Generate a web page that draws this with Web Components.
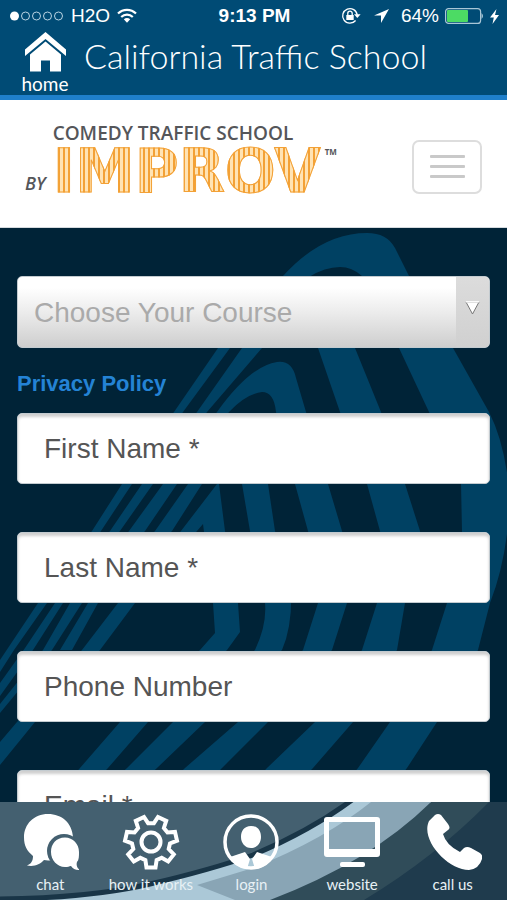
<!DOCTYPE html>
<html lang="en">
<head>
<meta charset="utf-8">
<meta name="viewport" content="width=device-width, initial-scale=1">
<title>California Traffic School</title>
<style>
  html, body { margin: 0; height: 100%; }
  body { font-family: "Liberation Sans", Arial, sans-serif; background: #002337; }
</style>
</head>
<body>
<traffic-app></traffic-app>

<script>
const define = (name, html, setup) => {
  const template = document.createElement('template');
  template.innerHTML = html;
  customElements.define(name, class extends HTMLElement {
    constructor() {
      super();
      this.attachShadow({ mode: 'open' }).append(template.content.cloneNode(true));
    }
    connectedCallback() { if (setup) setup(this, this.shadowRoot); }
  });
};

// Outline of a gear with one tooth pointing straight down.
const gearPath = (cx, cy, teeth, outer, inner) => {
  const points = [];
  for (let i = 0; i < teeth; i++) {
    const mid = 90 + i * 360 / teeth;
    [[-17, inner], [-10, outer], [10, outer], [17, inner]].forEach(([offset, r]) => {
      const a = (mid + offset) * Math.PI / 180;
      points.push((cx + r * Math.cos(a)).toFixed(1) + ' ' + (cy + r * Math.sin(a)).toFixed(1));
    });
  }
  return 'M' + points.join('L') + 'Z';
};

define('status-bar', `
<style>
  :host { display: grid; grid-template-columns: 1fr auto 1fr; align-items: center; height: 32px; padding: 0 8px 0 10px; color: #fff; font-size: 19px; line-height: 24px; }
  div { display: flex; align-items: center; }
  .left { gap: 7px; }
  .right { justify-content: flex-end; gap: 6px; }
  b { font-weight: 700; }
  svg { display: block; flex: none; }
</style>
<div class="left">
  <svg width="54" height="12" viewBox="0 0 54 12" fill="none" stroke="#b9d3e2"><circle cx="4.5" cy="6" r="4.5" fill="#fff" stroke="none"/><circle cx="15.500" cy="6" r="4"/><circle cx="26.500" cy="6" r="4"/><circle cx="37.500" cy="6" r="4"/><circle cx="48.500" cy="6" r="4"/></svg>
  <span>H2O</span>
  <svg width="20" height="16" viewBox="0 0 20 16" fill="none" stroke="#fff" stroke-width="2.200"><path d="M1 5.500C6 .6 14 .6 19 5.500M4.200 9c3.300-3.200 8.300-3.200 11.600 0"/><path d="M6.800 11.300Q10 8.600 13.200 11.300L10 14.800Z" fill="#fff" stroke="none"/></svg>
</div>
<b>9:13 PM</b>
<div class="right">
  <svg width="20" height="18" viewBox="0 0 20 18" fill="none" stroke="#fff" stroke-width="1.300"><path d="M14.600 13.500A7.300 7.300 0 1 1 16.200 8"/><path d="M13 7.200h6.600L16.300 11Z" fill="#fff" stroke="none"/><path d="M5.300 8h7.400v5H5.300Z" fill="#fff" stroke="none"/><path d="M6.800 8V6.300a2.200 2.200 0 0 1 4.400 0V8"/></svg>
  <svg width="28" height="16" viewBox="0 0 28 16"><path d="M22 1 7 7.500h7V15Z" fill="#fff"/></svg>
  <span>64%</span>
  <svg width="39" height="16" viewBox="0 0 39 16"><rect x=".6" y=".6" width="35" height="14.800" rx="3" fill="none" stroke="#a9c6d6" stroke-width="1.200"/><rect x="2" y="2" width="21" height="12" rx="1" fill="#4cdb64"/><path d="M36.500 5q3 3 0 6Z" fill="#a9c6d6"/></svg>
  <svg width="9" height="15" viewBox="0 0 9 15"><path d="M6.500 0 0 8.500h3.800L2.500 15 9 6H5Z" fill="#fff"/></svg>
</div>`);

define('page-header', `
<style>
  :host { display: flex; align-items: flex-start; gap: 14px; height: 63px; padding: 0 20px; background: #004b75; border-bottom: 5px solid #1f7fca; color: #fff; }
  a { display: flex; flex-direction: column; align-items: center; width: 50px; color: inherit; text-decoration: none; font: 400 19px/22px Lato, sans-serif; }
  svg { display: block; margin-bottom: 1px; }
  h1 { margin: 0; padding-top: 4px; font: 300 34px/40px Lato, sans-serif; white-space: nowrap; }
</style>
<a href="#home">
  <svg width="41" height="40" viewBox="0 0 41 40" fill="#fff"><path d="M0 17.500 20.500 0 41 17.500v6.500L20.500 7 0 24Z"/><path d="M5 22.500 20.500 9.500 36 22.500v17H25V28.500h-9v11H5Z"/></svg>
  <span><slot name="home"></slot></span>
</a>
<h1><slot></slot></h1>`);

define('brand-bar', `
<style>
  :host { display: flex; justify-content: space-between; align-items: center; height: 128px; box-sizing: border-box; padding: 0 25px; background: #fff; border-bottom: 1px solid #d5dade; }
  .logo { display: grid; grid-template-columns: auto auto auto; column-gap: 7px; row-gap: 3px; align-items: end; margin-top: -11px; color: #55565a; font-family: "Open Sans", sans-serif; }
  .top { grid-column: 2 / 4; font-size: 19px; line-height: 22px; font-weight: 600; }
  .by { font-size: 18px; line-height: 24px; font-style: italic; font-weight: 600; }
  .mark { font: 700 60px/48px "DejaVu Sans", sans-serif; color: transparent; background: repeating-linear-gradient(90deg, #f3a136 0 2px, #ffe3b4 2px 5px); background-clip: text; -webkit-background-clip: text; -webkit-text-stroke: 1px #f3a136; }
  .tm { align-self: start; font-size: 8px; line-height: 10px; font-weight: 700; margin-left: -3px; }
  button { display: flex; flex-direction: column; align-items: center; justify-content: center; gap: 7px; flex: none; width: 70px; height: 54px; margin-top: 6px; padding: 0; border: 2px solid #ddd; border-radius: 7px; background: #fff; }
  i { width: 35px; height: 3px; border-radius: 1px; background: #c9c9c9; }
</style>
<div class="logo">
  <span class="top">COMEDY TRAFFIC SCHOOL</span>
  <span class="by">BY</span><span class="mark">IMPROV</span><span class="tm">TM</span>
</div>
<button type="button" aria-label="Toggle navigation"><i></i><i></i><i></i></button>`);

define('course-select', `
<style>
  :host { display: block; position: relative; }
  select { display: block; width: 100%; height: 72px; box-sizing: border-box; appearance: none; padding: 0 50px 0 16px; border: 1px solid #c3cbd0; border-radius: 5px; color: #aaa; font: 400 28px "Liberation Sans", Arial, sans-serif; background: linear-gradient(#fff 15%, #ececec 50%, #cecece); }
  .arrow { position: absolute; top: 1px; right: 1px; bottom: 1px; width: 33px; display: flex; align-items: center; justify-content: center; border-radius: 0 4px 4px 0; background: linear-gradient(#dcdcdc, #d0d0d0); pointer-events: none; }
  svg { margin-bottom: 8px; }
</style>
<select aria-label="Choose Your Course"><option>Choose Your Course</option></select>
<span class="arrow"><svg width="15" height="14" viewBox="0 0 15 14"><path d="M1 1h13L7.500 13Z" fill="#fff" stroke="#777"/><path d="M1 .8h13" stroke="#fff" stroke-width="1.500"/></svg></span>`);

define('form-field', `
<style>
  :host { display: block; }
  input { display: block; width: 100%; height: 71px; box-sizing: border-box; padding: 0 26px; border: 1px solid #c3cbd0; border-radius: 5px; background: #fff; box-shadow: inset 0 3px 3px #cfcfcf; color: #555; font: 400 28px "Liberation Sans", Arial, sans-serif; }
  input::placeholder { color: #555; opacity: 1; }
</style>
<input>`, (host, root) => {
  const input = root.querySelector('input');
  input.type = host.getAttribute('type') || 'text';
  input.placeholder = host.getAttribute('label');
  input.setAttribute('aria-label', host.getAttribute('label'));
});

define('sign-up-form', `
<style>
  :host { display: block; position: relative; overflow: hidden; background: #002337; }
  .art { position: absolute; inset: 0; width: 100%; height: 100%; }
  form { position: relative; display: flex; flex-direction: column; gap: 48px; padding: 48px 17px 0; }
  .first { display: flex; flex-direction: column; gap: 24px; }
  a { align-self: flex-start; color: #2483d5; font-size: 22px; line-height: 24px; font-weight: 700; text-decoration: none; margin-bottom: -7px; }
</style>
<svg class="art" viewBox="0 228 507 574" preserveAspectRatio="xMidYMin slice" fill="#004163" aria-hidden="true">
  <path d="M230 348 283 276Q322 233 367 233Q387 233 395 248L409 276 453 348 489 412Q506 445 510 500Q507 560 490 603L478 650 437 722 407 768 380 802H330L358 768 390 722 432 650 447 603Q463 560 462 531L461 484 429 412 399 348 362 276Q352 267 340 267Q325 267 309 277Q285 300 262 348Z"/>
  <path d="M218 348h12L183 412 132 484 101 531 47 603 14 650 0 672V660L38 603 92 531 122 484 174 412Z"/>
  <path d="M242 348h20L207 412 153 484 120 531 63 603 33 650 0 696V683L25 648 55 603 110 531 142 484 197 412Z"/>
  <path d="M318 348h37L381 412 405 484 420 531Q420 565 405 603L397 650 353 722 313 768 280 802H235L267 768 315 722 362 650 377 603Q389 565 380 531L367 484 340 412Z"/>
  <path d="M217 412Q250 366 277 362Q292 360 296 378L306 412 328 484 342 531Q352 565 347 603L332 650 268 722 222 768 190 802H150L185 768 238 722 303 650 318 603Q320 565 308 531L295 484 276 412Q274 392 262 392Q246 394 229 412L177 484 145 531 82 603 52 650 0 713V704L43 650 70 603 129 531 163 484Z"/>
  <path d="M188 484 225 440Q235 430 243 440L268 484 275 531 291 585Q293 625 282 650L205 722 157 768 120 802H90L127 768 173 722 255 650Q267 625 265 603L250 531 242 484 202 484 172 531 98 603 72 650H60L88 603 155 531Z"/>
  <path d="M217 484 181 531 118 603 82 650 17 722 0 742V765L35 722 100 650 135 603 203 524 213 603 215 633 200 650 120 722 80 768 50 802H75L108 768 148 722 227 650 240 632 238 603 225 531 219 484Z"/>
</svg>
<form>
  <div class="first">
    <course-select></course-select>
    <a href="#privacy">Privacy Policy</a>
    <form-field label="First Name *"></form-field>
  </div>
  <form-field label="Last Name *"></form-field>
  <form-field label="Phone Number" type="tel"></form-field>
  <form-field label="Email *" type="email"></form-field>
</form>`);

define('tab-item', `
<style>
  :host { display: block; flex: 1; min-width: 0; }
  a { display: flex; flex-direction: column; align-items: center; gap: 3px; padding-top: 12px; color: #fff; text-decoration: none; font: 400 15px/18px Lato, sans-serif; white-space: nowrap; }
  span { color: #e8f1f5; }
  ::slotted(svg) { display: block; width: 58px; height: 58px; }
</style>
<a><slot></slot><span></span></a>`, (host, root) => {
  root.querySelector('a').href = '#' + host.getAttribute('label').replace(/ /g, '-');
  root.querySelector('span').textContent = host.getAttribute('label');
});

define('tab-bar', `
<style>
  :host { display: block; position: relative; height: 98px; overflow: hidden; background: #446070; }
  .art { position: absolute; inset: 0; width: 100%; height: 100%; }
  nav { position: relative; display: flex; padding-right: 4px; }
</style>
<svg class="art" viewBox="0 0 507 98" preserveAspectRatio="none" aria-hidden="true">
  <path d="M350 0H507V98H0Q90 97 150 83T253 54Q310 30 350 0Z" fill="#abc8d7"/>
  <path d="M371 0H430V98H235L197 83 253 66Q325 37 371 0Z" fill="#89a5b5"/>
  <path d="M431 0H507V98H270Q370 60 431 0Z" fill="#304c59"/>
  <path d="M489 0H507V98H364Q435 55 489 0Z" fill="#1f3b4d"/>
  <path d="M0 97Q90 96 150 82T253 53Q310 29 352 -2" fill="none" stroke="#193547" stroke-width="5"/>
</svg>
<nav>
  <tab-item label="chat"><svg viewBox="0 0 58 58" fill="#fff"><path d="M27 0C13 0 3 10 3 23.500 3 32 6 37 12 42c0 5-2 8-6 9.500 7 1.500 13-1 17-5.500l4 .6A24 24 0 0 0 52 23C51 9 41 0 27 0Z"/><circle cx="43" cy="37" r="17" fill="#446070"/><path d="M44 23.500C35 23.500 30 30 30 38s6 15 14 15c3 0 4-.5 6-1 2 3 5 4.500 9 4-3-2-4-5-3-8 2-2 2-6 2-10 0-8-6-14.500-14-14.500Z"/></svg></tab-item>
  <tab-item label="how it works"><svg viewBox="0 0 58 58" fill="none" stroke="#fff" stroke-width="4"><path class="gear" d="${gearPath(29, 28, 7, 26, 19)}"/><circle cx="29" cy="28" r="9.500"/></svg></tab-item>
  <tab-item label="login"><svg viewBox="0 0 58 58"><circle cx="29" cy="28" r="26" fill="none" stroke="#fff" stroke-width="3.500"/><path d="M29 12c7 0 10 5 10 11s-4 11-10 11-10-5-10-11 3-11 10-11ZM23 38l5 7-3 10Q12 53 8 43ZM35 38l-5 7 3 10Q46 53 50 43Z" fill="#fff"/></svg></tab-item>
  <tab-item label="website"><svg viewBox="0 0 58 58" fill="#fff"><path fill-rule="evenodd" d="M4 3h50q3 0 3 3v34q0 3-3 3H4q-3 0-3-3V6q0-3 3-3Zm2 5v27h46V8Z"/><rect x="17" y="48" width="25" height="5" rx="2"/></svg></tab-item>
  <tab-item label="call us"><svg viewBox="0 0 58 58" fill="#fff"><path d="M5 7 11 1q3-2 6 0l7 9q3 4 0 6l-5 4q3 11 17 18l4-4q3-2 7 0l9 5q3 2 2 6-3 10-13 11C24 56-4 26 5 7Z"/></svg></tab-item>
</nav>`);

define('traffic-app', `
<style>
  :host { display: flex; flex-direction: column; height: 100vh; overflow: hidden; }
  header { flex: none; background: #004b75; }
  sign-up-form { flex: 1; min-height: 0; }
  tab-bar, brand-bar { flex: none; }
</style>
<header>
  <status-bar></status-bar>
  <page-header>California Traffic School<span slot="home">home</span></page-header>
</header>
<brand-bar></brand-bar>
<sign-up-form></sign-up-form>
<tab-bar></tab-bar>`);
</script>
</body>
</html>
